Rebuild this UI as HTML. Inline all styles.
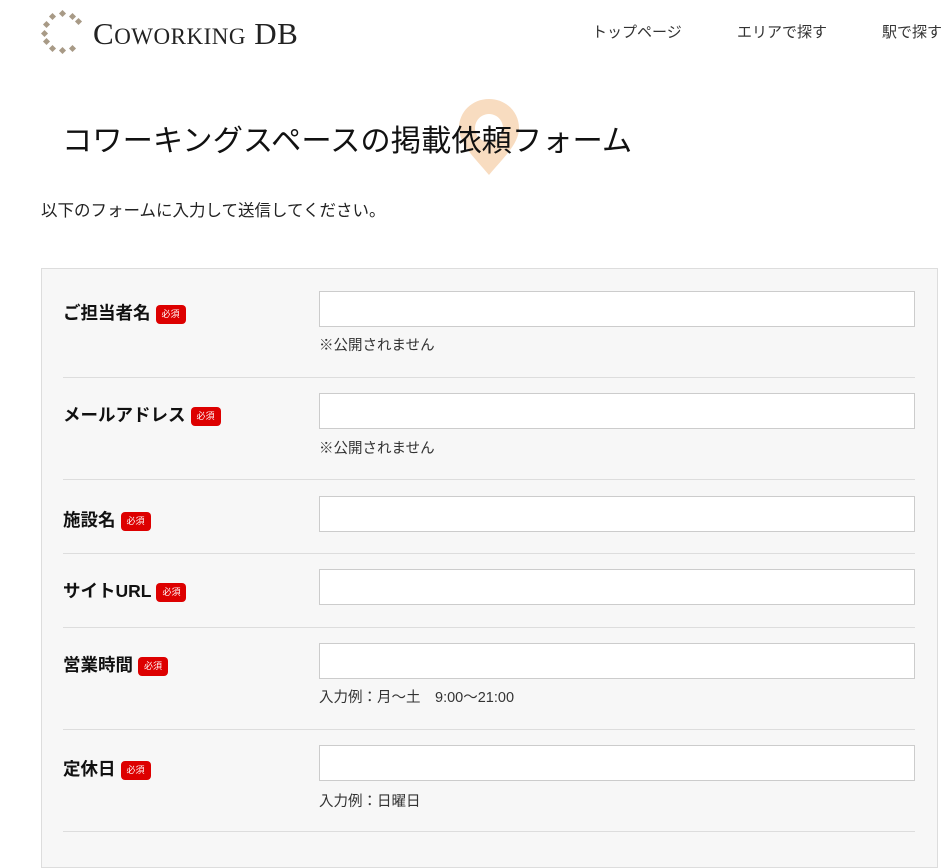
<!DOCTYPE html>
<html><head><meta charset="utf-8"><style>
*{margin:0;padding:0;box-sizing:border-box}
body{width:946px;height:843px;overflow:hidden;background:#fff;font-family:"Liberation Sans","Noto Sans CJK JP",sans-serif;color:#222;position:relative}
.abs{position:absolute}
.nav{top:21px;font-size:15px;color:#333;white-space:nowrap}
.logo{left:93px;top:16px;font-family:"Liberation Serif",serif;font-size:31px;color:#222;letter-spacing:0.5px}
.logo small{font-size:23px}
h1{position:absolute;left:62px;top:116px;font-size:30.3px;font-weight:400;color:#111;white-space:nowrap}
.intro{left:41px;top:197px;font-size:16.5px;color:#222}
.box{left:41px;top:268px;width:897px;height:600px;background:#f7f7f7;border:1px solid #ddd}
.lab{left:63px;font-size:17.5px;font-weight:700;color:#111;white-space:nowrap}
.req{display:inline-block;background:#d00;color:#fff;font-size:9px;font-weight:400;border-radius:4px;padding:5px 6px;margin-left:5px;vertical-align:2px;line-height:1}
.inp{left:319px;width:596px;height:36px;background:#fff;border:1px solid #ccc}
.note{left:319px;font-size:14.5px;color:#333}
.hr{left:63px;width:852px;height:1px;background:#ddd}
</style></head><body>
<svg class="abs" style="left:41px;top:10px" width="42" height="44" viewBox="0 0 42 44">
<g fill="#a89a86">
<rect x="19" y="1" width="5" height="5" transform="rotate(45 21.5 3.5)"/>
<rect x="29" y="4" width="5" height="5" transform="rotate(45 31.5 6.5)"/>
<rect x="9" y="4" width="5" height="5" transform="rotate(45 11.5 6.5)"/>
<rect x="3" y="12" width="5" height="5" transform="rotate(45 5.5 14.5)"/>
<rect x="1" y="21" width="5" height="5" transform="rotate(45 3.5 23.5)"/>
<rect x="3" y="29" width="5" height="5" transform="rotate(45 5.5 31.5)"/>
<rect x="9" y="36" width="5" height="5" transform="rotate(45 11.5 38.5)"/>
<rect x="19" y="38" width="5" height="5" transform="rotate(45 21.5 40.5)"/>
<rect x="29" y="36" width="5" height="5" transform="rotate(45 31.5 38.5)"/>
<rect x="35" y="9" width="5" height="5" transform="rotate(45 37.5 11.5)"/>
</g></svg>
<div class="abs logo">C<small>OWORKING</small> DB</div>
<div class="abs nav" style="left:592px">トップページ</div>
<div class="abs nav" style="left:737px">エリアで探す</div>
<div class="abs nav" style="left:882px">駅で探す</div>
<svg class="abs" style="left:456px;top:97px" width="66" height="80" viewBox="0 0 66 80">
<path d="M33 2C16 2 3 15 3 31c0 16 16 30 30 47C47 61 63 47 63 31 63 15 50 2 33 2z M33 17a14 14 0 1 0 0.01 0z" fill="#f8dcc0" fill-rule="evenodd"/>
</svg>
<h1>コワーキングスペースの掲載依頼フォーム</h1>
<div class="abs intro">以下のフォームに入力して送信してください。</div>
<div class="abs box"></div>

<div class="abs lab" style="top:300px">ご担当者名<span class="req">必須</span></div>
<div class="abs inp" style="top:291px"></div>
<div class="abs note" style="top:334px">※公開されません</div>
<div class="abs hr" style="top:377px"></div>

<div class="abs lab" style="top:402px">メールアドレス<span class="req">必須</span></div>
<div class="abs inp" style="top:393px"></div>
<div class="abs note" style="top:437px">※公開されません</div>
<div class="abs hr" style="top:479px"></div>

<div class="abs lab" style="top:507px">施設名<span class="req">必須</span></div>
<div class="abs inp" style="top:496px"></div>
<div class="abs hr" style="top:553px"></div>

<div class="abs lab" style="top:578px">サイトURL<span class="req">必須</span></div>
<div class="abs inp" style="top:569px"></div>
<div class="abs hr" style="top:627px"></div>

<div class="abs lab" style="top:652px">営業時間<span class="req">必須</span></div>
<div class="abs inp" style="top:643px"></div>
<div class="abs note" style="top:686px">入力例：月～土　9:00～21:00</div>
<div class="abs hr" style="top:729px"></div>

<div class="abs lab" style="top:756px">定休日<span class="req">必須</span></div>
<div class="abs inp" style="top:745px"></div>
<div class="abs note" style="top:790px">入力例：日曜日</div>
<div class="abs hr" style="top:831px"></div>
</body></html>
